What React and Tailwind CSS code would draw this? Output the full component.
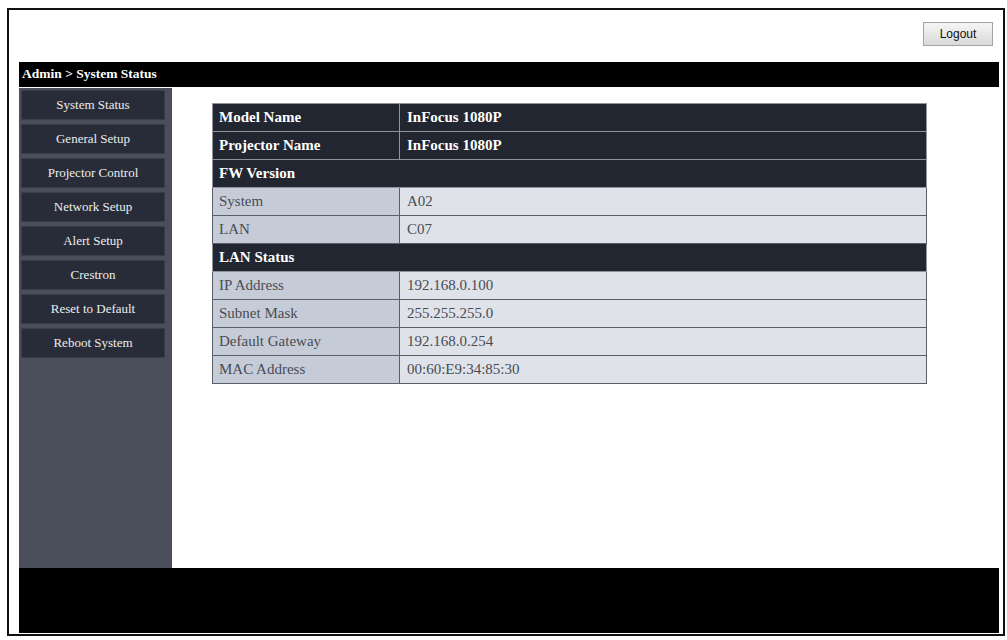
import React from 'react';

const MENU = [
  'System Status',
  'General Setup',
  'Projector Control',
  'Network Setup',
  'Alert Setup',
  'Crestron',
  'Reset to Default',
  'Reboot System',
];

// each row is either a dark section header (title only), a dark key/value row, or a light key/value row
const ROWS = [
  { dark: true, label: 'Model Name', value: 'InFocus 1080P' },
  { dark: true, label: 'Projector Name', value: 'InFocus 1080P' },
  { dark: true, label: 'FW Version' },
  { label: 'System', value: 'A02' },
  { label: 'LAN', value: 'C07' },
  { dark: true, label: 'LAN Status' },
  { label: 'IP Address', value: '192.168.0.100' },
  { label: 'Subnet Mask', value: '255.255.255.0' },
  { label: 'Default Gateway', value: '192.168.0.254' },
  { label: 'MAC Address', value: '00:60:E9:34:85:30' },
];

function StatusTable() {
  return (
    <table className="w-[715px] border-collapse border border-[#7d828b] text-[15px] leading-none">
      <tbody>
        {ROWS.map((r) => {
          if (r.dark && !r.value) {
            return (
              <tr key={r.label}>
                <td colSpan={2} className="h-[28px] bg-[#212630] border border-[#8e939c] px-[6px] text-white font-bold">
                  {r.label}
                </td>
              </tr>
            );
          }
          if (r.dark) {
            return (
              <tr key={r.label}>
                <td className="h-[28px] w-[187px] bg-[#212630] border border-[#8e939c] px-[6px] text-white font-bold">{r.label}</td>
                <td className="h-[28px] bg-[#212630] border border-[#8e939c] px-[7px] text-white font-bold">{r.value}</td>
              </tr>
            );
          }
          return (
            <tr key={r.label}>
              <td className="h-[28px] w-[187px] bg-[#c6ccd7] border border-[#5b5f67] px-[6px] text-[#484c54]">{r.label}</td>
              <td className="h-[28px] bg-[#dfe2e8] border border-[#5b5f67] px-[7px] text-[#484c54]">{r.value}</td>
            </tr>
          );
        })}
      </tbody>
    </table>
  );
}

export default function App() {
  return (
    <div className="w-[1007px] h-[640px] bg-white pl-[7px] pt-[8px] font-['Liberation_Serif',serif]">
      <div className="w-[998px] h-[628px] border-2 border-[#111] flex flex-col pl-[10px] pr-[4px]">
        {/* top strip with logout */}
        <div className="h-[52px] flex justify-end items-start pt-[12px] pr-[6px]">
          <button className="w-[70px] h-[24px] border border-[#a3a3a3] bg-gradient-to-b from-[#f6f6f6] to-[#d9d9d9] text-[12px] text-[#111] font-['Liberation_Sans',Arial,sans-serif]">
            Logout
          </button>
        </div>

        {/* breadcrumb */}
        <div className="h-[25px] bg-black text-white font-bold text-[13.5px] flex items-center pl-[3px]">
          Admin &gt; System Status
        </div>

        <div className="flex h-[481px] pt-px">
          {/* side menu */}
          <div className="w-[153px] bg-[#4b4f5c] pt-[2px] pl-[2px] pr-[7px] flex flex-col gap-[4px]">
            {MENU.map((m) => (
              <div key={m} className="h-[30px] bg-[#272c38] border border-[#3a3e4a] text-[#ececec] text-[13px] flex items-center justify-center">
                {m}
              </div>
            ))}
          </div>

          <div className="flex-1 pl-[40px] pt-[15px]">
            <StatusTable />
          </div>
        </div>

        <div className="h-[65px] bg-black" />
      </div>
    </div>
  );
}
